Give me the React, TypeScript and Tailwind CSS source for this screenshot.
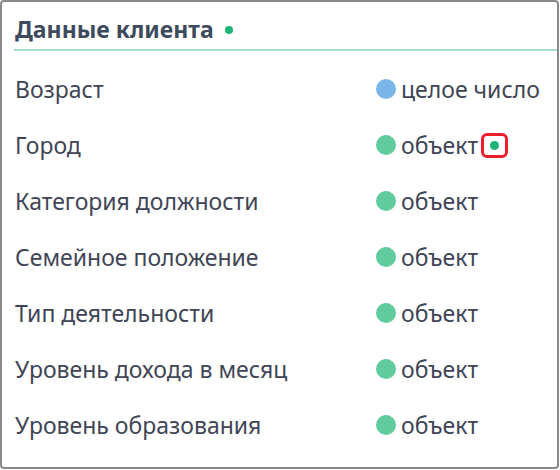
import React from "react";

const rows: { label: string; value: string; color: string; mark?: boolean }[] = [
  { label: "Возраст", value: "целое число", color: "bg-[#7ab6ea]" },
  { label: "Город", value: "объект", color: "bg-[#62cb9e]", mark: true },
  { label: "Категория должности", value: "объект", color: "bg-[#62cb9e]" },
  { label: "Семейное положение", value: "объект", color: "bg-[#62cb9e]" },
  { label: "Тип деятельности", value: "объект", color: "bg-[#62cb9e]" },
  { label: "Уровень дохода в месяц", value: "объект", color: "bg-[#62cb9e]" },
  { label: "Уровень образования", value: "объект", color: "bg-[#62cb9e]" },
];

export default function App() {
  return (
    <div className="w-[560px] h-[470px] bg-white" style={{ fontFamily: '"Noto Sans", "Open Sans", sans-serif' }}>
      <div className="w-[559px] h-[469px] border-2 border-[#8a8a8a] rounded-[4px] bg-white pl-[12px] pt-[8px]">
        <div className="h-[41px] flex items-center border-b-2 border-[#a3e0c6] pl-[1px]">
          <span className="text-[23px] font-bold text-[#3e4b5e] leading-none">Данные клиента</span>
          <span className="ml-[11px] w-[8px] h-[8px] rounded-full bg-[#1db577]" />
        </div>
        <div className="mt-[10px] flex flex-col pl-[1px]">
          {rows.map((r) => (
            <div key={r.label} className="h-[56px] flex items-center">
              <div className="w-[361px] text-[23px] text-[#3f4556] leading-none">{r.label}</div>
              <div className="flex items-center">
                <span className={`w-[20px] h-[20px] rounded-full ${r.color}`} />
                <span className="ml-[5px] text-[23px] text-[#3f4556] leading-none">{r.value}</span>
                {r.mark && (
                  <span className="ml-[3px] w-[27px] h-[25px] border-[3px] border-[#ea1f2b] rounded-[6px] flex items-center justify-center">
                    <span className="w-[9px] h-[9px] rounded-full bg-[#1db577]" />
                  </span>
                )}
              </div>
            </div>
          ))}
        </div>
      </div>
    </div>
  );
}
